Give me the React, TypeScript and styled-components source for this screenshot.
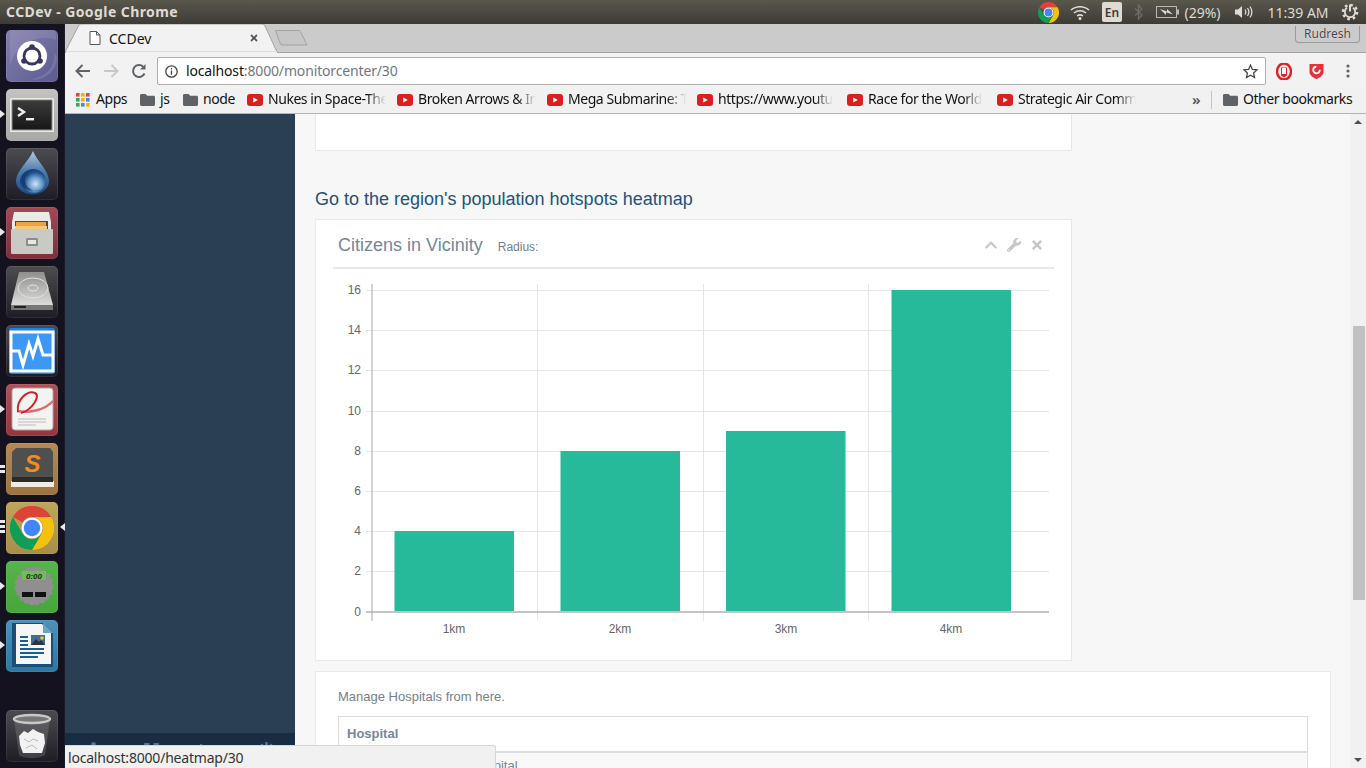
import React from 'react'
import styled, { createGlobalStyle } from 'styled-components'
import { FaChevronUp, FaWrench, FaTimes, FaCog, FaExpand, FaEyeSlash, FaPowerOff } from 'react-icons/fa'

const UI_FONT = '"Noto Sans", "Open Sans", sans-serif'
const PAGE_FONT = '"Liberation Sans", Arial, sans-serif'

const GlobalStyle = createGlobalStyle`
  html, body {
    margin: 0;
    padding: 0;
    height: 768px;
    overflow: hidden;
    background: #14121f;
  }
  * {
    box-sizing: border-box;
  }
`

const Screen = styled.div`
  position: relative;
  width: 1366px;
  height: 768px;
  display: flex;
  flex-direction: column;
  overflow: hidden;
`

/* ---------- ubuntu top panel ---------- */

const TopPanel = styled.div`
  height: 24px;
  flex: none;
  display: flex;
  align-items: center;
  padding-left: 6px;
  background: linear-gradient(#5a574c, #3c3b36);
  font-family: ${UI_FONT};
  color: #dfdbd2;
`

const WindowTitle = styled.div`
  font-size: 14px;
  font-weight: 700;
  flex: 1;
  letter-spacing: 0.42px;
  padding-bottom: 2px;
`

const Tray = styled.div`
  display: flex;
  align-items: center;
  height: 24px;
  font-size: 14px;
  padding-right: 7px;
`

const TraySlot = styled.div<{ $w: number; $ml?: number }>`
  width: ${(p) => p.$w}px;
  margin-left: ${(p) => p.$ml ?? 0}px;
  display: flex;
  align-items: center;
  justify-content: center;
  white-space: nowrap;
`

const LangBox = styled.div`
  width: 20px;
  height: 20px;
  background: #dfdbd2;
  color: #3c3b36;
  border-radius: 2px;
  font-size: 12px;
  font-weight: 600;
  display: flex;
  align-items: center;
  justify-content: center;
`

/* ---------- launcher ---------- */

const Desktop = styled.div`
  flex: 1;
  display: flex;
  min-height: 0;
`

const Launcher = styled.div`
  width: 65px;
  flex: none;
  display: flex;
  flex-direction: column;
  gap: 7px;
  padding: 6px 0 6px 6px;
  background: #14121f;
  border-right: 1px solid #1d1b2a;
`

const Tile = styled.div<{ $bg: string; $push?: boolean }>`
  position: relative;
  width: 52px;
  height: 52px;
  flex: none;
  border-radius: 5px;
  background: ${(p) => p.$bg};
  margin-top: ${(p) => (p.$push ? 'auto' : '0')};
  box-shadow: inset 0 0 0 1px rgba(255, 255, 255, 0.08);
  svg {
    display: block;
  }
`

const PipLeft = styled.span`
  position: absolute;
  left: -6px;
  top: 21px;
  border-left: 5px solid #e8e8e8;
  border-top: 4px solid transparent;
  border-bottom: 4px solid transparent;
`

const PipDot = styled.span<{ $top: number }>`
  position: absolute;
  left: -6px;
  top: ${(p) => p.$top}px;
  width: 5px;
  height: 3px;
  background: #e8e8e8;
`

const PipRight = styled.span`
  position: absolute;
  right: -7px;
  top: 21px;
  border-right: 5px solid #e8e8e8;
  border-top: 4px solid transparent;
  border-bottom: 4px solid transparent;
`

/* ---------- browser chrome ---------- */

const Browser = styled.div`
  flex: 1;
  min-width: 0;
  display: flex;
  flex-direction: column;
  font-family: ${UI_FONT};
`

const TabStrip = styled.div`
  height: 29px;
  flex: none;
  display: flex;
  background: #cbcbcb;
  border-bottom: 1px solid #a2a2a2;
`

const Tab = styled.div`
  position: relative;
  width: 213px;
  height: 29px;
  flex: none;
  display: flex;
  align-items: center;
  padding: 0 19px 1px 24px;
  font-size: 14px;
  color: #111;
  > * {
    position: relative;
  }
`

const TabShape = styled.svg`
  position: absolute !important;
  left: 0;
  top: 0;
`

const TabTitle = styled.span`
  margin-left: 8px;
  flex: 1;
`

const NewTab = styled.svg`
  margin: 5px 0 0 -4px;
  flex: none;
`

const ProfileButton = styled.div`
  margin: 2px 6px 0 auto;
  width: 65px;
  height: 17px;
  border: 1px solid #9a9a9a;
  border-top: none;
  border-radius: 0 0 4px 4px;
  font-size: 12px;
  line-height: 15px;
  text-align: center;
  color: #444;
  text-shadow: 0 0 1px #fff;
`

const Toolbar = styled.div`
  height: 33px;
  flex: none;
  display: flex;
  align-items: center;
  background: #f2f2f2;
  padding-top: 3px;
`

const NavIcon = styled.div<{ $w: number; $ml?: number }>`
  width: ${(p) => p.$w}px;
  margin-left: ${(p) => p.$ml ?? 0}px;
  flex: none;
  display: flex;
  align-items: center;
  justify-content: center;
`

const Omnibox = styled.div`
  width: 1109px;
  height: 28px;
  flex: none;
  margin-left: 10px;
  display: flex;
  align-items: center;
  padding: 0 7px 2px 7px;
  background: #fff;
  border: 1px solid #aeaeae;
  border-radius: 2px;
  font-size: 14px;
  letter-spacing: -0.15px;
  svg {
    flex: none;
    margin-top: 2px;
  }
`

const UrlHost = styled.span`
  color: #111;
  margin-left: 8px;
`

const UrlPath = styled.span`
  color: #6f7780;
  flex: 1;
`

const BookmarkBar = styled.div`
  height: 28px;
  flex: none;
  display: flex;
  align-items: center;
  padding: 0 0 2px 11px;
  background: #f1f1f1;
  border-bottom: 1px solid #b4b4b4;
  font-size: 14px;
  letter-spacing: -0.45px;
  color: #111;
`

const Bookmark = styled.div<{ $w: number; $gap?: number }>`
  width: ${(p) => p.$w}px;
  flex: none;
  display: flex;
  align-items: center;
  gap: ${(p) => p.$gap ?? 5}px;
  white-space: nowrap;
  svg {
    flex: none;
    margin-top: 2px;
  }
`

const FadeText = styled.span`
  max-width: 118px;
  overflow: hidden;
  -webkit-mask-image: linear-gradient(90deg, #000 84%, transparent 100%);
  mask-image: linear-gradient(90deg, #000 84%, transparent 100%);
`

const BookmarkSep = styled.div`
  width: 1px;
  height: 18px;
  margin: 2px 11px 0 8px;
  background: #c4c4c4;
`

const Chevrons = styled.span`
  margin-left: 42px;
  width: 14px;
  color: #555;
  font-size: 15px;
  font-weight: 600;
  text-align: center;
`

/* ---------- page ---------- */

const Viewport = styled.div`
  flex: 1;
  min-height: 0;
  display: flex;
  font-family: ${PAGE_FONT};
  color: #73879c;
`

const SideNav = styled.div`
  width: 230px;
  flex: none;
  display: flex;
  flex-direction: column;
  justify-content: flex-end;
  background: #2a3f54;
`

const SideFooter = styled.div`
  height: 35px;
  display: grid;
  grid-template-columns: repeat(4, 57.5px);
  background: #172d44;
  color: #5a738e;
  font-size: 17px;
  padding-top: 9px;
`

const SideFooterItem = styled.div`
  display: flex;
  justify-content: center;
  align-items: flex-start;
`

const Content = styled.div`
  flex: 1;
  min-width: 0;
  background: #f7f7f7;
  padding: 0 20px;
  overflow: hidden;
`

const Panel = styled.div<{ $w: number; $h?: number }>`
  width: ${(p) => p.$w}px;
  height: ${(p) => (p.$h ? `${p.$h}px` : 'auto')};
  background: #fff;
  border: 1px solid #e6e9ed;
`

const ClippedPanel = styled(Panel)`
  border-top: none;
`

const HeatmapLink = styled.div`
  margin: 38px 0 10px;
  font-size: 18px;
  line-height: 20px;
  color: #23527c;
`

const PanelHead = styled.div`
  height: 49px;
  margin: 0 17px;
  padding: 3px 5px 0;
  display: flex;
  align-items: center;
  border-bottom: 2px solid #e6e9ed;
`

const PanelTitle = styled.div`
  font-size: 18px;
  line-height: 20px;
`

const PanelSub = styled.div`
  font-size: 12px;
  margin: 3px 0 0 15px;
  color: #757f8a;
`

const PanelTools = styled.div`
  margin-left: auto;
  display: flex;
  align-items: center;
  gap: 9px;
  padding: 0 5px 0 0;
  color: #c5c7cb;
  font-size: 14px;
`

const Chart = styled.svg`
  display: block;
  font-family: ${PAGE_FONT};
  font-size: 12px;
`

const ManagePanel = styled(Panel)`
  margin-top: 10px;
  padding: 17px 22px 0;
  height: 200px;
`

const ManageIntro = styled.div`
  font-size: 13px;
  line-height: 16px;
  margin-bottom: 11px;
  color: #757f8a;
`

const Table = styled.table`
  width: 970px;
  border-collapse: collapse;
  border: 1px solid #ddd;
  font-size: 13px;
  th {
    height: 35px;
    text-align: left;
    padding: 0 8px;
    font-weight: 700;
    border-bottom: 2px solid #ddd;
  }
  td {
    height: 30px;
    padding: 5px 8px;
    background: #f9f9f9;
    vertical-align: top;
  }
`

const Scrollbar = styled.div`
  width: 16px;
  flex: none;
  display: flex;
  flex-direction: column;
  background: #f1f1f1;
`

const ScrollArrow = styled.div<{ $up?: boolean }>`
  height: 0;
  width: 0;
  margin: ${(p) => (p.$up ? '6px auto 0' : 'auto auto 6px')};
  border-left: 4px solid transparent;
  border-right: 4px solid transparent;
  box-sizing: content-box;
  ${(p) => (p.$up ? 'border-bottom: 4px solid #505050;' : 'border-top: 4px solid #505050;')}
`

const ScrollThumb = styled.div`
  width: 12px;
  height: 274px;
  margin: 202px 0 0 3px;
  background: #c1c1c1;
`

const StatusBubble = styled.div`
  position: absolute;
  left: 65px;
  bottom: 0;
  width: 431px;
  height: 23px;
  padding-left: 3px;
  display: flex;
  align-items: center;
  background: #f1f1f1;
  border-top: 1px solid #d6d6d6;
  border-right: 1px solid #d6d6d6;
  border-radius: 0 3px 0 0;
  font-family: ${UI_FONT};
  font-size: 14px;
  letter-spacing: -0.2px;
  color: #333;
`

/* ---------- drawings ---------- */

const ChromeLogo = ({ size }: { size: number }) => (
  <svg width={size} height={size} viewBox="0 0 48 48">
    <path fill="#db4437" d="M24 0A24 24 0 0 1 44.8 12H24a12 12 0 0 0-10.4 6L3.2 12A24 24 0 0 1 24 0z" />
    <path fill="#f4c20d" d="M44.8 12A24 24 0 0 1 24 48L34.4 30A12 12 0 0 0 24 12z" />
    <path fill="#0f9d58" d="M3.2 12A24 24 0 0 0 24 48L34.4 30A12 12 0 0 1 13.6 30z" />
    <circle cx="24" cy="24" r="11.5" fill="#fff" />
    <circle cx="24" cy="24" r="9" fill="#4285f4" />
  </svg>
)

const Folder = () => (
  <svg width="15" height="12" viewBox="0 0 15 12">
    <path fill="#5f6368" d="M1.4 0h4.2l1.6 1.7h6.4c.8 0 1.4.6 1.4 1.3v7.6c0 .8-.6 1.4-1.4 1.4H1.4C.6 12 0 11.4 0 10.6V1.4C0 .6.6 0 1.4 0z" />
  </svg>
)

const YouTube = () => (
  <svg width="16" height="12" viewBox="0 0 16 12">
    <rect width="16" height="12" rx="3" fill="#d9201f" />
    <path fill="#fff" d="M6.2 3.4 10.8 6 6.2 8.6z" />
  </svg>
)

const AppsGrid = () => (
  <svg width="14" height="14" viewBox="0 0 14 14">
    {[
      ['#e8453c', '#f4b400', '#e8453c'],
      ['#34a853', '#f4b400', '#4285f4'],
      ['#34a853', '#4285f4', '#f4b400'],
    ].map((row, r) =>
      row.map((c, i) => <rect key={`${r}-${i}`} x={i * 5} y={r * 5} width="3.6" height="3.6" fill={c} />),
    )}
  </svg>
)

const PowerGear = () => (
  <svg width="18" height="18" viewBox="0 0 18 18" fill="none" stroke="#dfdbd2">
    <circle cx="9" cy="9" r="7" strokeWidth="2.6" strokeDasharray="2.6 2.9" />
    <path d="M6 4.8a5.2 5.2 0 1 0 6 0" strokeWidth="1.8" />
    <path d="M9 1.500v7" strokeWidth="2" />
  </svg>
)

const DashArt = () => (
  <svg width="52" height="52" viewBox="0 0 52 52">
    <path d="M4 36C10 12 34 4 50 10V4a3 3 0 0 0-3-3H7a3 3 0 0 0-3 3z" fill="#fff" opacity="0.1" />
    <path d="M48 22c2 14-8 26-24 27 14 3 27-8 27-22z" fill="#fff" opacity="0.12" />
    <circle cx="26" cy="26" r="15" fill="#fff" />
    <circle cx="26" cy="26" r="8" fill="none" stroke="#3b3560" strokeWidth="2.8" />
    <circle cx="26" cy="17" r="2.800" fill="#3b3560" />
    <circle cx="18" cy="31" r="2.800" fill="#3b3560" />
    <circle cx="34" cy="31" r="2.800" fill="#3b3560" />
  </svg>
)

const TerminalArt = () => (
  <svg width="52" height="52" viewBox="0 0 52 52">
    <rect x="4" y="9" width="44" height="34" rx="1" fill="#ecece9" />
    <rect x="6" y="11" width="40" height="30" fill="#2b2b2b" stroke="#8c8c8a" />
    <rect x="7" y="12" width="38" height="28" fill="url(#termFill)" />
    <defs>
      <linearGradient id="termFill" x1="0" y1="0" x2="0" y2="1">
        <stop offset="0" stopColor="#3b3b3b" />
        <stop offset="1" stopColor="#181818" />
      </linearGradient>
    </defs>
    <polyline points="12,19 18,23 12,27" fill="none" stroke="#eee" strokeWidth="2.4" />
    <rect x="20" y="29" width="8" height="2.4" fill="#eee" />
  </svg>
)

const DelugeArt = () => (
  <svg width="52" height="52" viewBox="0 0 52 52">
    <defs>
      <radialGradient id="dropFill" cx="0.58" cy="0.62" r="0.5">
        <stop offset="0" stopColor="#cfe3f5" />
        <stop offset="0.55" stopColor="#6a9ccb" />
        <stop offset="1" stopColor="#1c4b84" />
      </radialGradient>
      <linearGradient id="dropTop" x1="0" y1="0" x2="0" y2="1">
        <stop offset="0" stopColor="#b9c6d4" />
        <stop offset="0.45" stopColor="#4d7fb3" />
        <stop offset="1" stopColor="#174a86" />
      </linearGradient>
    </defs>
    <path d="M27 3C31 13 43 23 43 33a16 13 0 0 1-33 0C10 23 23 13 27 3z" fill="url(#dropTop)" />
    <circle cx="27.500" cy="33" r="12" fill="url(#dropFill)" />
    <path d="M14 35a12 12 0 0 1 15-13 10 10 0 0 0-10 11 11 11 0 0 0 17 8 15 11 0 0 1-22-6z" fill="#123a6c" opacity="0.75" />
  </svg>
)

const FilesArt = () => (
  <svg width="52" height="52" viewBox="0 0 52 52">
    <path d="M8 5h35l2 10v8H6V15z" fill="#e9e9e6" />
    <rect x="9" y="14" width="33" height="10" fill="#4a4a4a" />
    <rect x="10" y="15" width="30" height="4" fill="#f0a23c" />
    <rect x="9" y="19" width="32" height="3" fill="#f5c979" />
    <rect x="5" y="22" width="42" height="25" rx="1" fill="#c9c9c6" />
    <rect x="20" y="31" width="12" height="8" rx="1.500" fill="#8b8b88" />
    <rect x="22" y="33" width="8" height="4" fill="#e8e8e6" />
  </svg>
)

const DiskArt = () => (
  <svg width="52" height="52" viewBox="0 0 52 52">
    <defs>
      <linearGradient id="diskFill" x1="0" y1="0" x2="0" y2="1">
        <stop offset="0" stopColor="#8f8f8d" />
        <stop offset="1" stopColor="#dcdcda" />
      </linearGradient>
    </defs>
    <path d="M13 6h25l9 33H5z" fill="url(#diskFill)" />
    <ellipse cx="27" cy="22" rx="15" ry="10" fill="none" stroke="#e0e0de" />
    <ellipse cx="27" cy="22" rx="5" ry="3" fill="none" stroke="#e6e6e4" />
    <path d="M5 39h42v5H5z" fill="#77777a" />
    <rect x="8" y="40" width="12" height="2" fill="#222" />
  </svg>
)

const MonitorArt = () => (
  <svg width="52" height="52" viewBox="0 0 52 52">
    <rect x="3" y="3" width="46" height="46" rx="3" fill="#1f7fe8" />
    <rect x="5" y="7" width="42" height="39" fill="#3d98f4" stroke="#fff" strokeWidth="3" />
    <polyline points="6,26 13,26 17,40 23,19 27,31 32,14 37,30 46,30" fill="none" stroke="#fff" strokeWidth="3" />
  </svg>
)

const EvinceArt = () => (
  <svg width="52" height="52" viewBox="0 0 52 52">
    <rect x="6" y="4" width="41" height="42" rx="3" fill="#f3f3f1" stroke="#a7a7a5" />
    <path d="M47 17C38 27 22 29 11 27" fill="none" stroke="#dd6a6c" strokeWidth="2.400" />
    <path d="M12 28C10 15 22 6 29 9c6 3-3 17-14 20" fill="none" stroke="#c9262a" strokeWidth="2" />
    <path d="M12 35h28M12 38h28M12 41h18" stroke="#bbb" />
  </svg>
)

const SublimeArt = () => (
  <svg width="52" height="52" viewBox="0 0 52 52">
    <rect x="5" y="38" width="43" height="6" fill="#f0ece4" />
    <path d="M10 5h34l3 4v30H6V9z" fill="#4f4f4d" />
    <rect x="6" y="34" width="41" height="5" fill="#2b2b2a" />
    <text x="26.500" y="29" textAnchor="middle" fontFamily={PAGE_FONT} fontSize="24" fontWeight="700" fontStyle="italic" fill="#f58a1f">
      S
    </text>
  </svg>
)

const ChromeArt = () => (
  <svg width="52" height="52" viewBox="0 0 52 52">
    <g transform="translate(4 4)">
      <ChromeLogo size={44} />
    </g>
  </svg>
)

const ClockArt = () => (
  <svg width="52" height="52" viewBox="0 0 52 52">
    <circle cx="28" cy="25" r="18.500" fill="#8f8f8f" />
    <circle cx="28" cy="25" r="18.500" fill="none" stroke="#8f8f8f" strokeWidth="2" strokeDasharray="3 3" />
    <rect x="16" y="10" width="24" height="9" fill="#6dbf5a" />
    <text x="28" y="17.500" textAnchor="middle" fontFamily={PAGE_FONT} fontSize="8" fontStyle="italic" fontWeight="700" fill="#222">
      0:00
    </text>
    <rect x="16" y="31" width="11" height="5" fill="#111" />
    <rect x="29" y="31" width="11" height="5" fill="#111" />
  </svg>
)

const WriterArt = () => (
  <svg width="52" height="52" viewBox="0 0 52 52">
    <path d="M6 3h31l10 10v34H6z" fill="#174f79" />
    <path d="M10 4h26l9 9v31H10z" fill="#f6f6f6" />
    <path d="M37 3v10h10" fill="#6ea2c6" />
    <path d="M14 17h8M14 21h8M14 25h8M14 29h24M14 33h24M14 37h18" stroke="#1d5e8e" strokeWidth="1.800" />
    <rect x="25" y="15" width="14" height="10" fill="#3d6f98" />
    <path d="M25 25l5-6 3 3 2-2 4 5z" fill="#333" />
    <circle cx="36" cy="18" r="1.800" fill="#f4c542" />
  </svg>
)

const TrashArt = () => (
  <svg width="52" height="52" viewBox="0 0 52 52">
    <path d="M8 9l5 36c4 4 22 4 26 0l5-36z" fill="#ffffff" opacity="0.14" />
    <ellipse cx="26" cy="9" rx="18" ry="4" fill="#777" stroke="#c8c8c8" strokeWidth="2.400" />
    <path d="M13 26l5-5 4 2 5-4 5 3 6 2 1 9-3 10H17l-3-8z" fill="#f2f2f2" />
    <path d="M18 29l5 3 4-3 5 2M20 38l6-3 5 4" stroke="#bbb" fill="none" />
  </svg>
)

const darkTile = 'linear-gradient(#4c4c50, #1e1d26)'

const hGrid = [16, 14, 12, 10, 8, 6, 4, 2]
const gridY: Record<number, number> = { 16: 290, 14: 330, 12: 370, 10: 411, 8: 451, 6: 491, 4: 531, 2: 571, 0: 612 }
const vGrid = [537, 703, 868]
const bars = [
  { label: '1km', x: 394.5, cx: 454, top: 531 },
  { label: '2km', x: 560.5, cx: 620, top: 451 },
  { label: '3km', x: 726, cx: 786, top: 431 },
  { label: '4km', x: 891.5, cx: 951, top: 290 },
]
const bookmarks = [
  'Nukes in Space-The',
  'Broken Arrows & In',
  'Mega Submarine: T',
  'https://www.youtu',
  'Race for the World',
  'Strategic Air Comm',
]

const App = () => (
  <Screen>
    <GlobalStyle />
    <TopPanel>
      <WindowTitle>CCDev - Google Chrome</WindowTitle>
      <Tray>
        <TraySlot $w={22}>
          <ChromeLogo size={21} />
        </TraySlot>
        <TraySlot $w={20} $ml={11}>
          <svg width="20" height="15" viewBox="0 0 20 15" fill="none" stroke="#dfdbd2" strokeWidth="1.500">
            <path d="M1 5c5-4.500 13-4.500 18 0" />
            <path d="M4 8c3.500-3 8.500-3 12 0" />
            <path d="M7 11c2-1.500 4-1.500 6 0" />
            <circle cx="10" cy="13.500" r="0.800" fill="#dfdbd2" />
          </svg>
        </TraySlot>
        <TraySlot $w={20} $ml={12}>
          <LangBox>En</LangBox>
        </TraySlot>
        <TraySlot $w={10} $ml={11}>
          <svg width="9" height="16" viewBox="0 0 9 16" fill="none" stroke="#6f6d65" strokeWidth="1.300">
            <path d="M1 4.500l7 6.500-3.500 4V1L8 5 1 11.500" />
          </svg>
        </TraySlot>
        <TraySlot $w={23} $ml={13}>
          <svg width="23" height="12" viewBox="0 0 23 12">
            <rect x="0.500" y="0.500" width="20" height="11" fill="none" stroke="#bdb9b0" />
            <rect x="21" y="3.500" width="2" height="5" fill="#bdb9b0" />
            <path d="M4 3l7 2.500V3l6 5.500-7-2.300V9z" fill="#dfdbd2" />
          </svg>
        </TraySlot>
        <TraySlot $w={37} $ml={5}>
          (29%)
        </TraySlot>
        <TraySlot $w={20} $ml={13}>
          <svg width="20" height="14" viewBox="0 0 20 14" fill="none" stroke="#dfdbd2" strokeWidth="1.300">
            <path d="M1 4.500h3L8 1v12L4 9.500H1z" fill="#dfdbd2" stroke="none" />
            <path d="M11 4.500c1 1.500 1 3.500 0 5M13.500 3c1.700 2.500 1.700 5.500 0 8M16 1.500c2.400 3.500 2.400 7.500 0 11" />
          </svg>
        </TraySlot>
        <TraySlot $w={62} $ml={13}>
          11:39 AM
        </TraySlot>
        <TraySlot $w={18} $ml={12}>
          <PowerGear />
        </TraySlot>
      </Tray>
    </TopPanel>

    <Desktop>
      <Launcher>
        <Tile $bg="linear-gradient(135deg, #8480ae, #5c5a90)">
          <DashArt />
        </Tile>
        <Tile $bg="linear-gradient(#c2c2c0, #a8a8a6)">
          <PipLeft />
          <TerminalArt />
        </Tile>
        <Tile $bg={darkTile}>
          <DelugeArt />
        </Tile>
        <Tile $bg="linear-gradient(#a04a54, #7e2e3a)">
          <PipLeft />
          <FilesArt />
        </Tile>
        <Tile $bg={darkTile}>
          <DiskArt />
        </Tile>
        <Tile $bg={darkTile}>
          <MonitorArt />
        </Tile>
        <Tile $bg="linear-gradient(#b05058, #97363f)">
          <PipLeft />
          <EvinceArt />
        </Tile>
        <Tile $bg="linear-gradient(#b58a52, #9d7440)">
          <PipDot $top={22} />
          <PipDot $top={27} />
          <SublimeArt />
        </Tile>
        <Tile $bg="linear-gradient(#bda65c, #a88f48)">
          <PipDot $top={18} />
          <PipDot $top={23} />
          <PipDot $top={28} />
          <PipRight />
          <ChromeArt />
        </Tile>
        <Tile $bg="linear-gradient(#55b54a, #46a63c)">
          <PipLeft />
          <ClockArt />
        </Tile>
        <Tile $bg="linear-gradient(#4b93ba, #2f76a0)">
          <PipLeft />
          <WriterArt />
        </Tile>
        <Tile $bg={darkTile} $push>
          <TrashArt />
        </Tile>
      </Launcher>

      <Browser>
        <TabStrip>
          <Tab>
            <TabShape width="213" height="29" viewBox="0 0 213 29">
              <path d="M0 28 L14 1 Q15 0 17 0 H197 Q199 0 200 2 L212 28 Z" fill="#f2f2f2" stroke="#a2a2a2" />
              <path d="M1 28.500H212" stroke="#f2f2f2" strokeWidth="2" />
            </TabShape>
            <svg width="12" height="14" viewBox="0 0 12 14" fill="#fff" stroke="#555">
              <path d="M1 .5h6.500L11 4v9.500H1zM7.500 .5V4H11" />
            </svg>
            <TabTitle>CCDev</TabTitle>
            <FaTimes size={10} color="#555" />
          </Tab>
          <NewTab width="36" height="18" viewBox="0 0 36 18">
            <path d="M1.500 1.500H25q1 0 1.500 1L33 16H8q-1 0-1.500-1z" fill="#c6c6c6" stroke="#a3a3a3" />
          </NewTab>
          <ProfileButton>Rudresh</ProfileButton>
        </TabStrip>

        <Toolbar>
          <NavIcon $w={16} $ml={10}>
            <svg width="16" height="14" viewBox="0 0 16 14" fill="none" stroke="#5f6368" strokeWidth="2">
              <path d="M15 7H2M7.500 1 1.500 7l6 6" />
            </svg>
          </NavIcon>
          <NavIcon $w={16} $ml={12}>
            <svg width="16" height="14" viewBox="0 0 16 14" fill="none" stroke="#c8c8c8" strokeWidth="2">
              <path d="M1 7h13M8.500 1l6 6-6 6" />
            </svg>
          </NavIcon>
          <NavIcon $w={16} $ml={12}>
            <svg width="16" height="16" viewBox="0 0 16 16" fill="none" stroke="#5f6368" strokeWidth="2">
              <path d="M13.500 10.500A6 6 0 1 1 12.200 3.700" />
              <path d="M14.500 1v5.500H9" fill="#5f6368" stroke="none" />
            </svg>
          </NavIcon>
          <Omnibox>
            <svg width="13" height="13" viewBox="0 0 13 13" fill="none" stroke="#444" strokeWidth="1.300">
              <circle cx="6.500" cy="6.500" r="5.700" />
              <path d="M6.500 5.500v4.200M6.500 3v1.400" />
            </svg>
            <UrlHost>localhost</UrlHost>
            <UrlPath>:8000/monitorcenter/30</UrlPath>
            <svg width="15" height="15" viewBox="0 0 15 15" fill="none" stroke="#444" strokeWidth="1.300">
              <path d="M7.500 1.200 9.400 5.400l4.600.5-3.400 3.100.9 4.600-4-2.300-4 2.300.9-4.600L1 5.900l4.600-.5z" />
            </svg>
          </Omnibox>
          <NavIcon $w={16} $ml={10}>
            <svg width="16" height="17" viewBox="0 0 16 17">
              <ellipse cx="8" cy="8.500" rx="7" ry="8" fill="none" stroke="#e32020" strokeWidth="2.400" />
              <path d="M5 4.500h6v8l-3 2-3-2z" fill="#e32020" />
              <path d="M6 5h4v6H6z" fill="#fff" />
            </svg>
          </NavIcon>
          <NavIcon $w={16} $ml={16}>
            <svg width="15" height="16" viewBox="0 0 15 16">
              <path d="M.5 1h14v8c0 3.500-3.500 5.500-7 7-3.500-1.500-7-3.500-7-7z" fill="#e8303a" />
              <circle cx="7.500" cy="7" r="3.300" fill="none" stroke="#fff" strokeWidth="1.800" strokeDasharray="15 5" />
            </svg>
          </NavIcon>
          <NavIcon $w={4} $ml={22}>
            <svg width="4" height="14" viewBox="0 0 4 14" fill="#5f6368">
              <circle cx="2" cy="2" r="1.600" />
              <circle cx="2" cy="7" r="1.600" />
              <circle cx="2" cy="12" r="1.600" />
            </svg>
          </NavIcon>
        </Toolbar>

        <BookmarkBar>
          <Bookmark $w={64} $gap={6}>
            <AppsGrid />
            <span>Apps</span>
          </Bookmark>
          <Bookmark $w={43}>
            <Folder />
            <span>js</span>
          </Bookmark>
          <Bookmark $w={64}>
            <Folder />
            <span>node</span>
          </Bookmark>
          {bookmarks.map((title) => (
            <Bookmark $w={150} key={title}>
              <YouTube />
              <FadeText>{title}</FadeText>
            </Bookmark>
          ))}
          <Chevrons>»</Chevrons>
          <BookmarkSep />
          <Bookmark $w={128}>
            <Folder />
            <span>Other bookmarks</span>
          </Bookmark>
        </BookmarkBar>

        <Viewport>
          <SideNav>
            <SideFooter>
              <SideFooterItem>
                <FaCog />
              </SideFooterItem>
              <SideFooterItem>
                <FaExpand />
              </SideFooterItem>
              <SideFooterItem>
                <FaEyeSlash />
              </SideFooterItem>
              <SideFooterItem>
                <FaPowerOff />
              </SideFooterItem>
            </SideFooter>
          </SideNav>

          <Content>
            <ClippedPanel $w={757} $h={37} />
            <HeatmapLink>Go to the region's population hotspots heatmap</HeatmapLink>
            <Panel $w={757} $h={442}>
              <PanelHead>
                <PanelTitle>Citizens in Vicinity</PanelTitle>
                <PanelSub>Radius:</PanelSub>
                <PanelTools>
                  <FaChevronUp />
                  <FaWrench />
                  <FaTimes />
                </PanelTools>
              </PanelHead>
              <Chart width="755" height="391" viewBox="316 269 755 391">
                {hGrid.map((v) => (
                  <line key={v} x1="366" x2="1049" y1={gridY[v] + 0.5} y2={gridY[v] + 0.5} stroke="#e6e6e6" />
                ))}
                {vGrid.map((x) => (
                  <line key={x} x1={x + 0.5} x2={x + 0.5} y1="284" y2="621" stroke="#e6e6e6" />
                ))}
                <line x1="372" x2="372" y1="284" y2="621" stroke="#c4c4c4" strokeWidth="1.500" />
                {bars.map((b) => (
                  <rect key={b.label} x={b.x} y={b.top} width="119.500" height={611 - b.top} fill="#26b99a" />
                ))}
                <line x1="366" x2="1049" y1="612" y2="612" stroke="#b0b0b0" strokeWidth="1.500" />
                {Object.entries(gridY).map(([v, y]) => (
                  <text key={v} x="361" y={y + 4} textAnchor="end" fill="#666">
                    {v}
                  </text>
                ))}
                {bars.map((b) => (
                  <text key={b.label} x={b.cx} y="633" textAnchor="middle" fill="#666">
                    {b.label}
                  </text>
                ))}
              </Chart>
            </Panel>
            <ManagePanel $w={1016}>
              <ManageIntro>Manage Hospitals from here.</ManageIntro>
              <Table>
                <thead>
                  <tr>
                    <th>Hospital</th>
                  </tr>
                </thead>
                <tbody>
                  <tr>
                    <td>Rajiv Gandhi Central Hospital</td>
                  </tr>
                </tbody>
              </Table>
            </ManagePanel>
          </Content>

          <Scrollbar>
            <ScrollArrow $up />
            <ScrollThumb />
            <ScrollArrow />
          </Scrollbar>
        </Viewport>
      </Browser>
    </Desktop>

    <StatusBubble>localhost:8000/heatmap/30</StatusBubble>
  </Screen>
)

export default App
